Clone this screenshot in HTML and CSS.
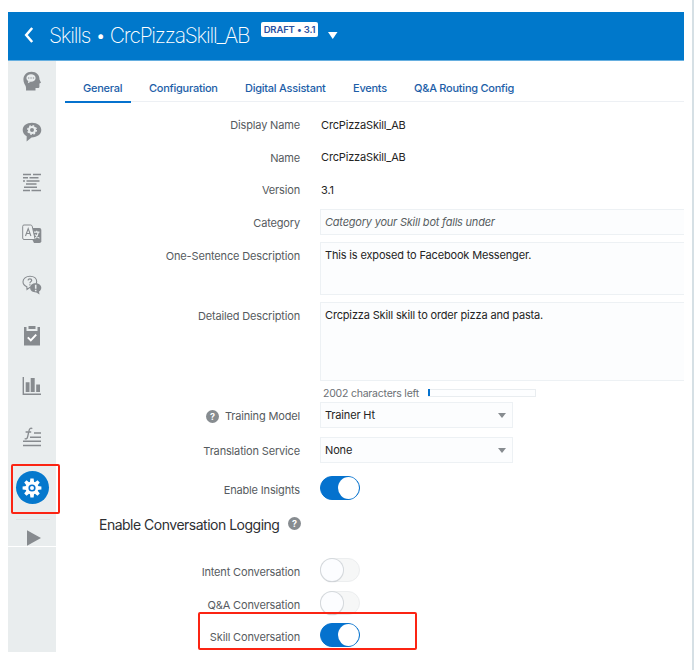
FILE: index.html
```html
<!DOCTYPE html>
<html lang="en">
<head>
<meta charset="utf-8">
<title>CrcPizzaSkill_AB</title>
<link rel="stylesheet" href="styles.css">
</head>
<body>
<div class="app">
  <header class="header">
    <svg class="back" width="10" height="18" viewBox="0 0 10 18"><path d="M8.2 2 2.2 9l6 7" fill="none" stroke="#fff" stroke-width="2.5"/></svg>
    <h1 class="title">Skills • CrcPizzaSkill_AB</h1>
    <span class="badge">DRAFT • 3.1</span>
    <svg class="caret" width="10" height="7" viewBox="0 0 10 7"><path d="M0 0h9.5L4.75 7z" fill="#fff"/></svg>
  </header>
  <div class="body">
    <nav class="sidebar">
      <a class="item"><svg width="20" height="20" viewBox="0 0 20 20"><path d="M4 19.5c.2-3 0-4.500-1.500-6.500C-.5 7 3 .8 9.500.8c5 0 8 3.200 8 7.700l1.500 3.200-1.600.8v3.200c0 .8-.6 1.300-1.400 1.300h-2.500v2.500z" fill="#878b8f"/><ellipse cx="9" cy="7" rx="4.600" ry="3.800" fill="#e9edee"/><path d="M6.300 10l-.5 2.200 3-1.500z" fill="#e9edee"/><path d="M6 7h1.300M8.400 7h1.300M10.800 7h1.300" stroke="#878b8f" stroke-width="1.200"/></svg></a>
      <a class="item"><svg width="20" height="20" viewBox="0 0 20 20"><path d="M10 .8c5.400 0 9.300 3 9.300 7.300S15.400 15.400 9.500 15.400L4.600 19.600l.1-5.400C2 12.900.7 10.700.7 8.100.7 3.800 4.600.8 10 .8z" fill="#878b8f"/><circle cx="10" cy="8" r="3" fill="none" stroke="#e9edee" stroke-width="2"/><circle cx="10" cy="8" r="4.300" fill="none" stroke="#e9edee" stroke-width="1.400" stroke-dasharray="1.700 1.677"/></svg></a>
      <a class="item"><svg width="20" height="20" viewBox="0 0 20 20"><path d="M1 1.500h8M11 1.500h8M1 4.700h5M7.500 4.700h9M1 7.900h2M4.500 7.900h13M4 11.100h10.500M2 14.300h13M1 17.500h7M9.500 17.500h9.500" stroke="#878b8f" stroke-width="1.500"/></svg></a>
      <a class="item"><svg width="20" height="20" viewBox="0 0 20 20"><path d="M11 4h6.500q1.800 0 1.800 1.800v11.400q0 1.800-1.800 1.800H12L10 15z" fill="#878b8f"/><path d="M2 1h6.500q1.300 0 1.700 1.200l3 13.300H2Q.7 15.500.7 14V2.300Q.7 1 2 1z" fill="#eef1f2" stroke="#878b8f"/><path d="M3.500 12 6.200 4.500 8.900 12M4.500 9.500h3.400" fill="none" stroke="#878b8f" stroke-width="1.100"/><path d="M12 8.200h5.500M14.700 6.800v1.400M16.300 8.200q-.7 4-3 6M13.300 10.500q1.300 2.500 4.200 3.700" fill="none" stroke="#e9edee" stroke-width="1.200"/></svg></a>
      <a class="item"><svg width="20" height="20" viewBox="0 0 20 20"><path d="M8 1.300c4 0 6.700 2.200 6.700 5.300S12 12.200 8 12.200l-3 2.200-.2-2.700C2.500 10.800 1 9 1 6.800c0-3.300 3-5.500 7-5.500z" fill="none" stroke="#878b8f" stroke-width="1.100"/><path d="M6 5.300q.2-1.500 1.900-1.500 1.800 0 1.800 1.500c0 1.400-1.800 1.300-1.800 2.900M7.900 9.200v1.200" fill="none" stroke="#878b8f" stroke-width="1.200"/><path d="M13.500 8.200c3.300 0 5.800 1.900 5.800 4.500 0 1.800-1 3.100-2.300 3.800l.5 3.100-3.200-2.200c-3.500 0-6.200-1.900-6.200-4.700 0-2.600 2.200-4.500 5.400-4.500z" fill="#878b8f"/><path d="M13.700 9.700v4M13.700 14.700v1.500" stroke="#e9edee" stroke-width="1.600"/></svg></a>
      <a class="item"><svg width="20" height="20" viewBox="0 0 20 20"><path d="M2 1h2.500v4h11V1H18v18.500H2z" fill="#878b8f"/><path d="M6.500 0h7v3h-7z" fill="#878b8f"/><path d="m5.800 11.400 3 3 5.400-5.800" fill="none" stroke="#fff" stroke-width="2"/></svg></a>
      <a class="item"><svg width="20" height="20" viewBox="0 0 20 20"><path d="M1.300 1v17.300H19" fill="none" stroke="#878b8f" stroke-width="1.400"/><path d="M3.700 6.200h3.800V16H3.700zM8.700 2h4v14h-4zM14.200 8.500H18V16h-3.800z" fill="#878b8f"/></svg></a>
      <a class="item"><svg width="20" height="20" viewBox="0 0 20 20"><path d="M10.300 1.600C8.600.6 7.400 1.600 6.900 4.200L5.700 9.500C5.200 11.800 4 12.400 2.700 11.500M3.600 5h5.600" fill="none" stroke="#878b8f" stroke-width="1.300"/><path d="M12 6h7M8 10.200h11M1 14.300h18M1 18.500h18" stroke="#878b8f" stroke-width="1.500"/></svg></a>
      <a class="item active"><span class="disc"><svg width="22" height="22" viewBox="-11 -11 22 22"><g fill="#fff"><path id="tooth" d="M-1.600-9.400h3.200l.5 4h-4.200z"/><use href="#tooth" transform="rotate(45)"/><use href="#tooth" transform="rotate(90)"/><use href="#tooth" transform="rotate(135)"/><use href="#tooth" transform="rotate(180)"/><use href="#tooth" transform="rotate(225)"/><use href="#tooth" transform="rotate(270)"/><use href="#tooth" transform="rotate(315)"/><circle r="6.500"/></g><circle r="2.800" fill="#fff" stroke="#0572ce" stroke-width="1.600"/></svg></span></a>
      <a class="item play"><svg width="16" height="16" viewBox="0 0 16 16"><path d="M1 .3 15 8 1 15.700z" fill="#878b8f"/></svg></a>
    </nav>
    <main class="main">
      <div class="tabs">
        <a class="tab current">General</a>
        <a class="tab">Configuration</a>
        <a class="tab">Digital Assistant</a>
        <a class="tab">Events</a>
        <a class="tab">Q&amp;A Routing Config</a>
      </div>
      <div class="form">
        <div class="row plain"><label>Display Name</label><span class="value">CrcPizzaSkill_AB</span></div>
        <div class="row plain"><label>Name</label><span class="value">CrcPizzaSkill_AB</span></div>
        <div class="row plain"><label>Version</label><span class="value">3.1</span></div>
        <div class="row category"><label>Category</label><div class="field hint">Category your Skill bot falls under</div></div>
        <div class="row sentence"><label>One-Sentence Description</label><div class="field">This is exposed to Facebook Messenger.</div></div>
        <div class="row detail"><label>Detailed Description</label><div class="field">Crcpizza Skill skill to order pizza and pasta.</div></div>
        <div class="row counter"><label></label><span class="left">2002 characters left</span><span class="meter"><span class="fill"></span></span></div>
        <div class="row training"><label><span class="help">?</span>Training Model</label><div class="field select">Trainer Ht<i class="arrow"></i></div></div>
        <div class="row translation"><label>Translation Service</label><div class="field select">None<i class="arrow"></i></div></div>
        <div class="row switch insights"><label>Enable Insights</label><span class="toggle on"></span></div>
        <h2 class="heading"><span>Enable Conversation Logging</span><span class="help">?</span></h2>
        <div class="row switch"><label>Intent Conversation</label><span class="toggle"></span></div>
        <div class="row switch"><label>Q&amp;A Conversation</label><span class="toggle"></span></div>
        <div class="row switch marked"><label>Skill Conversation</label><span class="toggle on"></span></div>
      </div>
    </main>
  </div>
</div>
</body>
</html>
```
FILE: styles.css
```css
*, *::before, *::after { box-sizing: border-box; }
body {
  margin: 0;
  height: 670px;
  padding: 12px 8px 0;
  background: #fff;
  border-right: 2px solid #d6e0e5;
  font: 11px/16px Inter, "Liberation Sans", sans-serif;
  letter-spacing: -0.16px;
  color: #333;
  overflow: hidden;
}
.app { width: 676px; height: 640px; }
.header {
  display: flex;
  height: 49px;
  padding-left: 16px;
  background: #0078cb;
  border-bottom: 1px solid #66afe0;
}
.back { margin-top: 14px; }
.title {
  margin: 9px 0 0 15px;
  width: 202px;
  font-size: 21px;
  line-height: 29px;
  font-weight: 200;
  letter-spacing: -1.25px;
  white-space: nowrap;
  color: #fff;
}
.badge {
  margin: 10px 0 0 10px;
  width: 57px;
  height: 15px;
  border-radius: 2px;
  background: #fff;
  color: #2a50a2;
  font-size: 9.5px;
  line-height: 15px;
  font-weight: 600;
  text-align: center;
  white-space: nowrap;
}
.caret { margin: 20px 0 0 10px; }
.body { display: flex; height: 591px; }
.sidebar {
  display: flex;
  flex-direction: column;
  width: 48px;
  height: 591px;
  background: #e9edee;
}
.item {
  display: flex;
  align-items: center;
  justify-content: center;
  height: 50.8px;
  flex: none;
}
.item:first-child { height: 40px; margin-bottom: 6px; }
.item svg { display: block; }
.active { position: relative; }
.active::after {
  content: "";
  position: absolute;
  left: 3px;
  top: 1px;
  width: 49px;
  height: 50px;
  border: 2px solid #fb2413;
  border-radius: 2px;
}
.disc {
  display: flex;
  align-items: center;
  justify-content: center;
  width: 33px;
  height: 33px;
  border-radius: 50%;
  background: #0578cd;
}
.play {
  height: 29px;
  margin: 5px 0 0;
  padding: 11px 0 0 4px;
  border-bottom: 1px solid #fff;
  background: linear-gradient(#dfe3e5, #dfe3e5) 8px 1px / 34px 1px no-repeat;
}
.main { width: 628px; }
.tabs {
  display: flex;
  margin-left: 9px;
  height: 41px;
  border-bottom: 1px solid #edf0f4;
}
.tab {
  height: 42px;
  padding: 20px 0 0 18px;
  line-height: 15px;
  font-weight: 500;
  letter-spacing: -0.25px;
  color: #1c5ea8;
  white-space: nowrap;
}
.current { width: 66px; border-bottom: 2px solid #0572ce; }
.tab:nth-child(2) { width: 96px; }
.tab:nth-child(3) { width: 108px; }
.tab:nth-child(4) { width: 61px; }
.form { padding-top: 7px; }
.row { display: flex; position: relative; }
.row label {
  display: flex;
  justify-content: flex-end;
  width: 244px;
  margin-right: 20px;
  flex: none;
  color: #565b60;
  white-space: nowrap;
}
.plain { height: 32.700px; padding-top: 8px; }
.value { color: #242424; margin: -0.5px 0 0 1px; }
.field {
  flex: 1;
  padding: 4px 4px;
  background: #fcfdfe;
  border: 1px solid #edf1f4;
  border-right: 0;
  color: #242424;
  white-space: nowrap;
}
.hint { font-style: italic; letter-spacing: -0.21px; color: #585d62; }
.category { height: 26px; margin-top: 2px; }
.category label { padding-top: 6px; }
.sentence { height: 53px; margin-top: 7px; }
.sentence label { padding-top: 6px; }
.detail { height: 79px; margin-top: 7px; }
.detail label { padding-top: 6px; }
.counter { height: 21px; }
.left {
  width: 108px;
  padding: 5px 0 0 3px;
  font-size: 10.5px;
  letter-spacing: -0.22px;
  color: #6b7075;
  white-space: nowrap;
}
.meter { width: 108px; height: 8px; margin-top: 8px; border: 1px solid #e9edf0; border-left: 0; background: #fdfeff; }
.fill { display: block; width: 2px; height: 7px; margin-top: -1px; background: #0572ce; }
.training { height: 26px; }
.training label { padding-top: 6px; }
.select {
  flex: none;
  width: 193px;
  border-right: 1px solid #edf1f4;
  display: flex;
  justify-content: space-between;
}
.arrow {
  margin: 6px 2px 0 0;
  width: 8px;
  height: 5px;
  background: #878c90;
  clip-path: polygon(0 0, 100% 0, 50% 100%);
}
.translation { height: 26px; margin-top: 9px; }
.translation label { padding-top: 6px; }
.help {
  width: 13px;
  height: 13px;
  margin: 2px 6px 0 0;
  border-radius: 50%;
  background: #878c90;
  color: #fff;
  font-size: 9px;
  line-height: 13px;
  font-weight: 700;
  letter-spacing: 0;
  text-align: center;
}
.switch { height: 32.500px; }
.switch label { padding-top: 6px; }
.insights { margin-top: 13px; height: 38px; }
.toggle {
  width: 40px;
  height: 24px;
  border: 1px solid #eceeef;
  border-radius: 12px;
  background: #f6f7f7;
}
.toggle::before {
  content: "";
  display: block;
  width: 22px;
  height: 22px;
  border-radius: 50%;
  background: #fcfdff;
  box-shadow: 0 0 0 1px #d4d8dc, 0 1px 1px #a9adb1;
}
.on { background: #0572ce; border-color: #0572ce; }
.on::before { margin-left: 17px; width: 21px; background: #fff; box-shadow: none; }
.heading {
  display: flex;
  margin: 0 0 23px 43px;
  height: 21px;
  font-size: 14px;
  line-height: 21px;
  font-weight: 400;
  letter-spacing: -0.5px;
  color: #2e3033;
}
.heading span:first-child { width: 189px; white-space: nowrap; }
.heading .help { margin-top: 3px; }
.marked::after {
  content: "";
  position: absolute;
  left: 142px;
  top: -11px;
  width: 219px;
  height: 38px;
  border: 2px solid #fb2413;
  border-radius: 2px;
}
```
